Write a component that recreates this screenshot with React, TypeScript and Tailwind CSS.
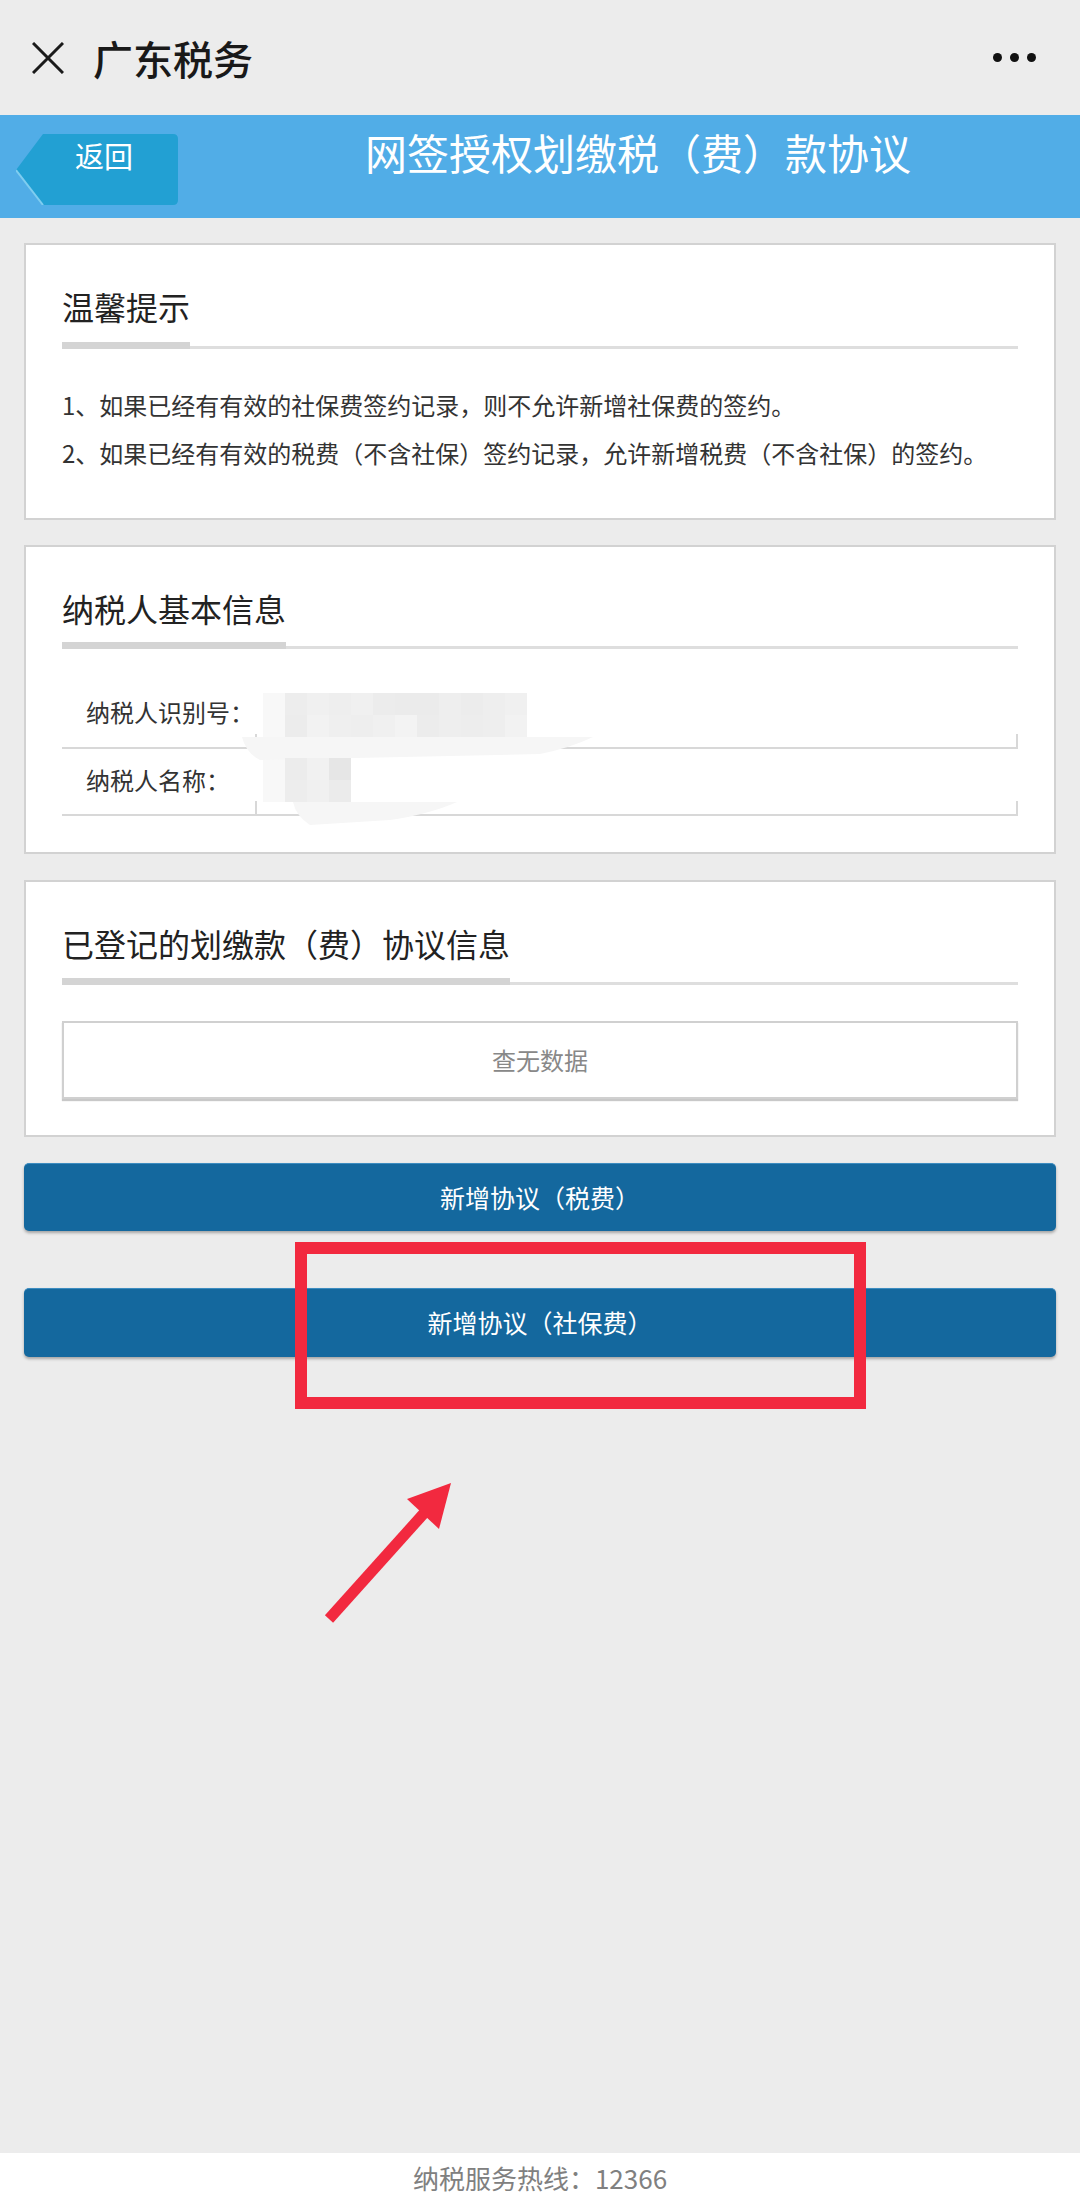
import React from 'react';

const notices = [
  '1、如果已经有有效的社保费签约记录，则不允许新增社保费的签约。',
  '2、如果已经有有效的税费（不含社保）签约记录，允许新增税费（不含社保）的签约。',
];

// mosaic cells over the redacted taxpayer values
const mosaicTop = [
  ['#ededed', '#f0f0f0', '#eeeeee', '#f0f0f0', '#ececec', '#ebebeb', '#ebebeb', '#eeeeee', '#ececec', '#eeeeee', '#f0f0f0'],
  ['#ececec', '#f2f2f2', '#efefef', '#eeeeee', '#f0f0f0', '#f3f3f3', '#ececec', '#eeeeee', '#ededed', '#eeeeee', '#f2f2f2'],
];
const mosaicBottom = [
  ['#ececec', '#f1f1f1', '#e6e6e6'],
  ['#ededed', '#f0f0f0', '#ebebeb'],
];

const SectionTitle = ({ text, gap = 'pb-[20px]' }: { text: string; gap?: string }) => (
  <div className="border-b-[3px] border-[#dedede]">
    <div className={`w-fit -mb-[3px] border-b-[7px] border-[#d4d4d4] ${gap} text-[32px] leading-[32px] text-[#222]`}>
      {text}
    </div>
  </div>
);

const Card = ({ children, className }: { children: React.ReactNode; className?: string }) => (
  <div className={`bg-white border-2 border-[#d2d2d2] px-[36px] pt-[45px] ${className ?? ''}`}>{children}</div>
);

const InfoRow = ({ label, height }: { label: string; height: string }) => (
  <div className={`flex border-b-2 border-[#d8d8d8] ${height}`}>
    <div className="w-[193px] pl-[24px] flex items-center pb-[4px] text-[24px] text-[#333]">{label}</div>
    <div className="flex-1 flex items-end justify-between">
      <div className="w-[2px] h-[13px] bg-[#d8d8d8]" />
      <div className="w-[2px] h-[13px] bg-[#d8d8d8]" />
    </div>
  </div>
);

export default function App() {
  return (
    <div className="relative w-[1080px] h-[2203px] bg-[#ececec] flex flex-col font-['Noto_Sans_CJK_SC','Noto_Sans',sans-serif]">
      {/* top bar */}
      <div className="h-[115px] flex items-center">
        <svg className="ml-[32px] w-[32px] h-[32px]" viewBox="0 0 32 32">
          <path d="M1 1 L31 31 M31 1 L1 31" stroke="#1a1a1a" strokeWidth="3" fill="none" />
        </svg>
        <div className="ml-[29px] text-[40px] leading-none font-medium text-[#191919]">广东税务</div>
        <div className="ml-auto mr-[44px] flex gap-[8px]">
          <span className="w-[9px] h-[9px] rounded-full bg-[#111]" />
          <span className="w-[9px] h-[9px] rounded-full bg-[#111]" />
          <span className="w-[9px] h-[9px] rounded-full bg-[#111]" />
        </div>
      </div>

      {/* page header */}
      <div className="h-[103px] bg-[#51ade7] flex items-start">
        <div className="relative ml-[16px] mt-[19px] w-[162px] h-[71px]">
          <svg className="absolute inset-0" width="162" height="71" viewBox="0 0 162 71">
            <path d="M0 36 L27 0 L157 0 Q162 0 162 5 L162 66 Q162 71 157 71 L27 71 Z" fill="#22a0d3" />
            <path d="M0 36 L27 71" stroke="#7fcdf0" strokeWidth="2" />
          </svg>
          <div className="relative pl-[59px] pt-[3px] text-[29px] leading-[36px] text-white">返回</div>
        </div>
        <div className="flex-1 ml-[18px] mt-[16px] text-center text-[42px] leading-[42px] text-white">
          网签授权划缴税（费）款协议
        </div>
      </div>

      <div className="px-[24px] pt-[25px] flex flex-col">
        <Card className="pb-[41px]">
          <SectionTitle text="温馨提示" />
          <div className="mt-[32px] text-[24px] leading-[48px] text-[#333]">
            {notices.map((n) => (
              <div key={n}>{n}</div>
            ))}
          </div>
        </Card>

        <Card className="mt-[25px] pb-[36px]">
          <SectionTitle text="纳税人基本信息" gap="pb-[18px]" />
          <div className="mt-[32px]">
            <InfoRow label="纳税人识别号：" height="h-[68px]" />
            <InfoRow label="纳税人名称：" height="h-[67px]" />
          </div>
        </Card>

        <Card className="mt-[26px] pb-[36px]">
          <SectionTitle text="已登记的划缴款（费）协议信息" gap="pb-[19px]" />
          <div className="mt-[36px] h-[78px] border-2 border-[#d0d0d0] shadow-[0_2px_1px_#c8c8c8] flex items-center justify-center text-[24px] text-[#888]">
            查无数据
          </div>
        </Card>

        <button className="mt-[26px] h-[68px] rounded-[5px] bg-[#14689e] border-t border-[#3c8cc0] shadow-[0_2px_3px_rgba(0,0,0,0.3)] text-white text-[25px]">
          新增协议（税费）
        </button>
        <button className="mt-[57px] h-[69px] rounded-[5px] bg-[#14689e] border-t border-[#3c8cc0] shadow-[0_2px_3px_rgba(0,0,0,0.3)] text-white text-[25px]">
          新增协议（社保费）
        </button>
      </div>

      <div className="flex-1" />
      <div className="h-[50px] bg-white text-center text-[26px] leading-[50px] text-[#808080]">纳税服务热线：12366</div>

      {/* redaction over the taxpayer values */}
      <svg className="absolute left-[240px] top-[688px] pointer-events-none" width="360" height="140" viewBox="0 0 360 140">
        <rect x="23" y="5" width="22" height="109" fill="#f8f8f8" />
        {mosaicTop.map((row, r) =>
          row.map((c, i) => <rect key={`t${r}-${i}`} x={45 + i * 22} y={5 + r * 22} width="22" height="22" fill={c} />)
        )}
        <path d="M2 49 L353 49 Q330 60 300 66 L20 72 Q6 65 2 49 Z" fill="#f6f6f6" />
        {mosaicBottom.map((row, r) =>
          row.map((c, i) => <rect key={`b${r}-${i}`} x={45 + i * 22} y={70 + r * 22} width="22" height="22" fill={c} />)
        )}
        <path d="M53 114 L217 114 Q190 126 150 132 L70 137 Q56 128 53 114 Z" fill="#f6f6f6" />
      </svg>

      {/* annotation: red box and arrow */}
      <div className="absolute left-[295px] top-[1242px] w-[571px] h-[167px] border-[12px] border-[#f2293f]" />
      <svg className="absolute left-[300px] top-[1470px] pointer-events-none" width="170" height="170" viewBox="0 0 170 170">
        <path d="M29 149 L126 41" stroke="#f2293f" strokeWidth="11" />
        <path d="M151 13 L107 29 L139 59 Z" fill="#f2293f" />
      </svg>
    </div>
  );
}
